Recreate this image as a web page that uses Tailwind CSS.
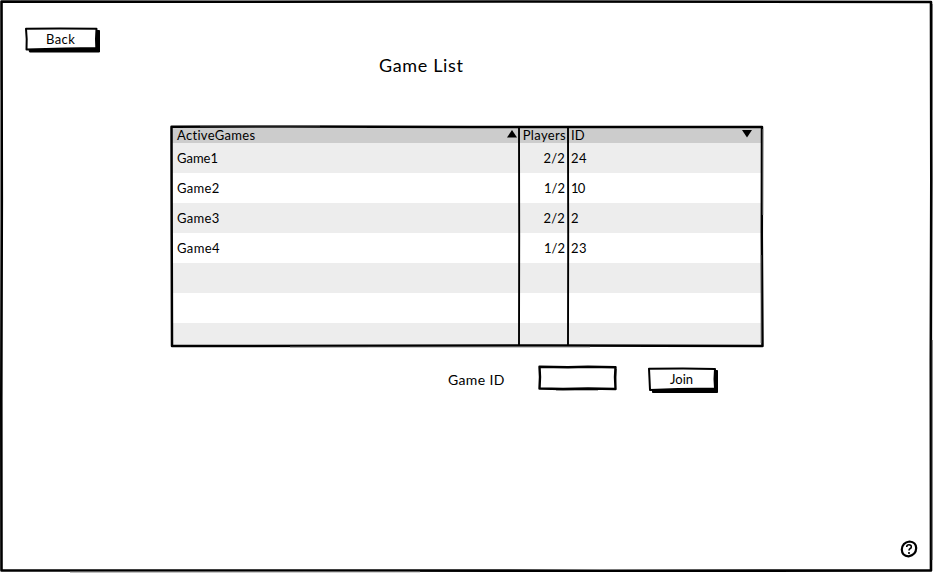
<!DOCTYPE html>
<html lang="en">
<head>
<meta charset="utf-8">
<title>Game List</title>
<script src="https://cdn.jsdelivr.net/npm/@tailwindcss/browser@4"></script>
</head>
<body class="bg-white">
<main class="relative flex h-[573px] w-[933px] flex-col overflow-hidden bg-white font-['Lato','Open_Sans',sans-serif] text-[13px] text-black">
  <!-- hand-drawn window frame -->
  <svg class="pointer-events-none absolute inset-0" width="933" height="573" fill="none" stroke="#000" stroke-linejoin="round">
    <path d="M1.500 1.500L220 1.800L520 1.500L931 2L931.300 180L930.800 360L931 570.500L600 570.700L300 570.500L1.500 570.500L1.300 400L1.800 200Z" stroke-width="2.600"/>
    <path d="M0.500 90V220M932.500 4V110M932.300 340V560M70 572L420 571.800" stroke="#777" stroke-width="1"/>
  </svg>

  <header class="flex h-[125px] items-start pl-[25px] pt-[27px]">
    <button class="relative h-[26px] w-[76px]">
      <svg class="absolute inset-0" width="76" height="26">
        <path d="M4 22L72 22V3.500H74.500V25L4.500 25Z" fill="#000" stroke="#000"/>
        <path d="M1 1.800L35 1.500L71.500 1.700L71 12L71.300 21L40 21.500L1.500 22.500L1.700 12Z" fill="#fff" stroke="#000" stroke-width="2" stroke-linejoin="round"/>
      </svg>
      <span class="absolute left-[21px] top-[4px] leading-[16px] tracking-[0.4px]">Back</span>
    </button>
    <h1 class="ml-[278px] mt-[27px] text-[18px] leading-[22px] tracking-[0.65px] whitespace-nowrap">Game List</h1>
  </header>

  <section class="relative ml-[170px] h-[222px] w-[593px] pl-[2px] pt-[3px]">
    <div class="grid w-[589px] grid-cols-[347px_49px_193px]">
      <div class="col-span-3 grid h-[15px] grid-cols-subgrid items-center bg-[#ccc] leading-[15px]">
        <div class="flex items-center justify-between pl-[5px] pr-[2px]"><span class="tracking-[0.3px]">ActiveGames</span><svg class="mb-[3px]" width="10" height="8"><path d="M5 0L10 7.500H0Z"/></svg></div>
        <div class="pr-[2px] text-right tracking-[0.35px] whitespace-nowrap">Players</div>
        <div class="flex items-center justify-between pl-[3px] pr-[9px]"><span>ID</span><svg class="mb-[3px]" width="10" height="8"><path d="M0 0H10L5 7.500Z"/></svg></div>
      </div>
      <div class="col-span-3 grid h-[30px] grid-cols-subgrid items-center bg-[#ededed] pt-[2px]"><div class="pl-[5px]">Game1</div><div class="pr-[3px] text-right tracking-[0.2px]">2/2</div><div class="pl-[3px] tracking-[0.5px]">24</div></div>
      <div class="col-span-3 grid h-[30px] grid-cols-subgrid items-center pt-[2px]"><div class="pl-[5px] tracking-[0.3px]">Game2</div><div class="pr-[3px] text-right">1/2</div><div class="pl-[3px] tracking-[-0.8px]">10</div></div>
      <div class="col-span-3 grid h-[30px] grid-cols-subgrid items-center bg-[#ededed] pt-[2px]"><div class="pl-[5px] tracking-[0.3px]">Game3</div><div class="pr-[3px] text-right tracking-[0.2px]">2/2</div><div class="pl-[3px]">2</div></div>
      <div class="col-span-3 grid h-[30px] grid-cols-subgrid items-center pt-[2px]"><div class="pl-[5px] tracking-[0.4px]">Game4</div><div class="pr-[3px] text-right">1/2</div><div class="pl-[3px] tracking-[0.5px]">23</div></div>
      <div class="col-span-3 h-[30px] bg-[#ededed]"></div>
      <div class="col-span-3 h-[30px]"></div>
      <div class="col-span-3 h-[22px] bg-[#ededed]"></div>
    </div>
    <!-- table outline and column rules -->
    <svg class="pointer-events-none absolute inset-0 overflow-visible" width="593" height="222" fill="none" stroke="#000" stroke-linejoin="round">
      <path d="M1.500 1.800L120 1.500L300 2L592 2L591.800 110L592.500 221L380 220.500L2 221L1.700 110Z" stroke-width="2.500"/>
      <path d="M349 2L349.200 110L349 220M398 2L398.200 110L398 220" stroke-width="1.900"/>
      <path d="M592.800 4V90M591 130V218M120 222H420M30 .800H150" stroke="#777" stroke-width=".800"/>
    </svg>
  </section>

  <form class="flex h-[50px] items-start pl-[448px] pt-[18px]">
    <label class="mt-[7px] w-[90px] text-[14px] leading-[16px] tracking-[0.35px] whitespace-nowrap">Game ID</label>
    <div class="h-[26px] w-[79px]">
      <svg width="79" height="26" fill="none" stroke="#000" stroke-linejoin="round">
        <path d="M1.500 1.700L30 2.300L50 1.700L77.500 2.300L77 12L77.500 24L50 23.500L25 24L1.500 23.500L2 12Z" stroke-width="2.400"/>
        <path d="M1.500 2V24M18 24.800H60M78 4L77.500 23M12 1.500H48" stroke-width="1"/>
      </svg>
    </div>
    <button type="button" class="relative ml-[31px] mt-[2px] h-[26px] w-[70px]">
      <svg class="absolute inset-0" width="70" height="26">
        <path d="M4.500 22.500L67 22V3.500H69.500V25.500H4.500Z" fill="#000" stroke="#000"/>
        <path d="M1 1.700L35 1.500L67 2L66.500 12L67 21.500L30 22L2 23L1.500 12Z" fill="#fff" stroke="#000" stroke-width="2" stroke-linejoin="round"/>
      </svg>
      <span class="absolute left-[22px] top-[4px] leading-[16px]">Join</span>
    </button>
  </form>

  <footer class="mt-auto flex justify-end pb-[15px] pr-[15px]">
    <svg width="18" height="18" fill="none" stroke="#000">
      <path d="M9.500 1.500Q16 2 16.200 8Q16 15 8.500 16.300Q2 16 1.800 9.500Q2.300 2.500 9.500 1.500Z" stroke-width="2.200"/>
      <path d="M6.700 7Q6.700 4.800 9 4.800Q11.500 4.800 11.300 6.800Q11.200 8 10.200 8.500Q9 9.300 9 10.500M9 12V14" stroke-width="1.600"/>
    </svg>
  </footer>
</main>
</body>
</html>
